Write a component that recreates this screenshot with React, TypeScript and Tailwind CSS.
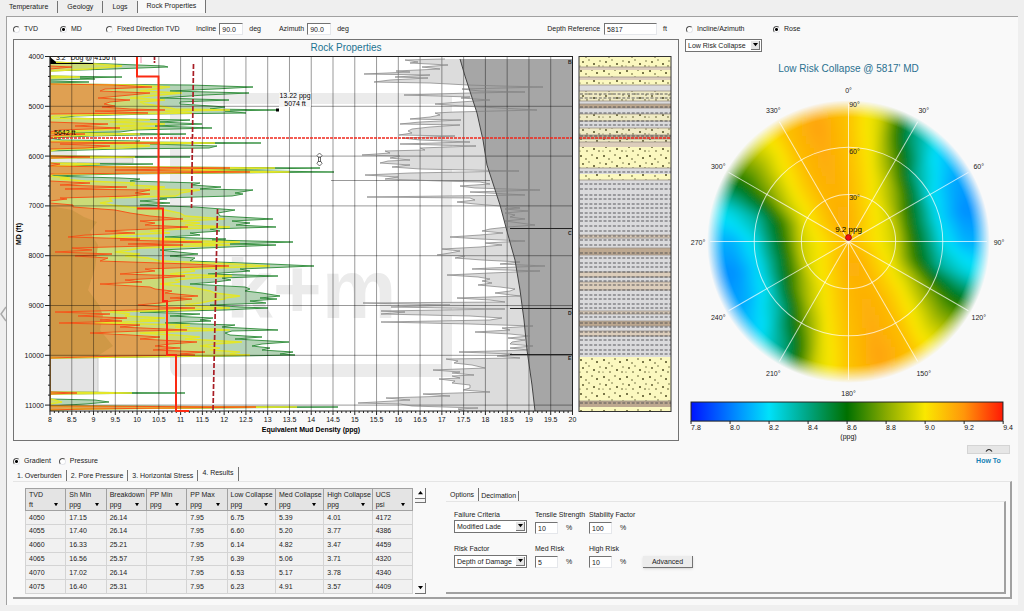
import { useState } from "react";
import type { ReactNode } from "react";

// depth position, low / medium / high risk collapse position
const collapse: number[][] = [
  [57, 50, 50, 50], [62, 50, 50, 50], [64, 50, 95, 112], [66, 50, 122, 164], [67, 72, 112, 168], [69, 50, 88, 112],
  [71, 50, 50, 50], [76, 50, 50, 50], [77, 50, 80, 122], [78, 50, 50, 80], [79, 50, 50, 95], [80, 50, 50, 50],
  [81, 50, 50, 50], [82, 50, 50, 89], [83, 50, 50, 50], [84, 50, 50, 50], [85, 112, 130, 190], [87, 152, 170, 253],
  [89, 105, 155, 215], [91, 100, 140, 170], [93, 150, 182, 249], [95, 130, 160, 205], [98, 98, 130, 160],
  [100, 130, 165, 229], [102, 110, 140, 180], [104, 104, 145, 180], [106, 115, 160, 212], [107, 102, 165, 225],
  [109, 130, 175, 210], [110, 165, 230, 277], [111, 95, 165, 225], [113, 148, 192, 246], [114, 50, 120, 150],
  [116, 50, 55, 75], [118, 50, 50, 60], [120, 50, 150, 190], [122, 50, 110, 160], [124, 108, 165, 202],
  [126, 75, 115, 155], [128, 120, 160, 212], [130, 60, 100, 135], [132, 50, 60, 120], [133, 50, 50, 60],
  [134, 85, 140, 186], [136, 50, 60, 90], [138, 50, 50, 50], [140, 50, 50, 62], [141, 50, 50, 140],
  [142, 50, 110, 135], [143, 160, 215, 261], [144, 60, 110, 150], [146, 110, 150, 217], [148, 85, 122, 209],
  [149, 50, 60, 120], [151, 50, 50, 50], [156, 50, 50, 50], [157, 90, 135, 190], [158, 50, 50, 50],
  [163, 50, 50, 50], [164, 60, 100, 153], [166, 50, 50, 60], [167, 110, 140, 165], [168, 230, 275, 320],
  [170, 115, 160, 205], [172, 250, 290, 334], [174, 50, 55, 120], [176, 50, 50, 50], [178, 50, 70, 120],
  [179, 50, 60, 140], [181, 50, 85, 130], [183, 90, 135, 200], [185, 60, 130, 192], [187, 127, 165, 221],
  [189, 65, 145, 200], [190, 150, 200, 253], [193, 135, 180, 235], [194, 150, 180, 243], [196, 130, 175, 232],
  [198, 60, 110, 160], [199, 67, 110, 167], [201, 50, 112, 140], [203, 50, 100, 170], [205, 73, 112, 140],
  [207, 73, 130, 195], [210, 115, 165, 235], [213, 130, 180, 218], [216, 150, 185, 220], [219, 183, 225, 273],
  [221, 140, 180, 232], [223, 155, 200, 250], [225, 145, 185, 236], [227, 188, 230, 276], [229, 150, 180, 210],
  [231, 105, 150, 220], [233, 135, 170, 190], [235, 85, 120, 200], [237, 68, 110, 165], [239, 140, 185, 226],
  [240, 120, 160, 212], [242, 202, 240, 293], [244, 128, 190, 230], [245, 183, 230, 276], [248, 72, 140, 205],
  [250, 92, 130, 160], [252, 55, 115, 178], [254, 112, 140, 198], [256, 75, 125, 170], [258, 108, 148, 195],
  [261, 100, 160, 190], [264, 190, 235, 270], [266, 229, 270, 314], [269, 145, 190, 240], [271, 155, 195, 250],
  [274, 120, 170, 208], [276, 185, 232, 278], [278, 160, 195, 222], [280, 125, 175, 231], [282, 142, 180, 215],
  [284, 100, 160, 190], [287, 150, 190, 245], [289, 155, 200, 250], [291, 172, 210, 245], [293, 165, 215, 262],
  [296, 198, 240, 280], [298, 170, 225, 260], [299, 192, 225, 277], [301, 172, 210, 250], [303, 160, 200, 266],
  [305, 138, 185, 210], [307, 162, 210, 240], [308, 195, 230, 268], [310, 135, 185, 225], [312, 55, 110, 140],
  [314, 110, 130, 200], [316, 78, 125, 170], [318, 127, 165, 213], [320, 100, 140, 200], [321, 122, 160, 211],
  [323, 59, 95, 165], [325, 140, 190, 235], [327, 120, 175, 222], [330, 187, 230, 278], [331, 140, 190, 232],
  [333, 90, 140, 225], [335, 130, 175, 230], [337, 160, 200, 262], [339, 140, 185, 235], [342, 197, 242, 289],
  [344, 170, 215, 262], [346, 155, 200, 252], [348, 180, 220, 270], [350, 153, 210, 262], [352, 205, 240, 293],
  [354, 180, 230, 280], [355, 195, 250, 295], [356, 120, 200, 240], [358, 50, 50, 50], [392, 50, 50, 50],
  [393, 77, 132, 185], [394, 50, 50, 50], [399, 50, 50, 50], [400, 50, 55, 95], [402, 50, 62, 109],
  [404, 50, 50, 85], [406, 50, 50, 50], [407, 256, 297, 338], [409, 85, 85, 85], [410, 50, 50, 50],
];

const breakdown: number[][] = [
  [59, 445], [60, 405], [62, 418], [63, 410], [65, 448], [67, 422], [69, 440], [71, 396], [72, 410], [74, 364],
  [75, 430], [77, 395], [78, 428], [80, 390], [82, 374], [83, 430], [85, 468], [86, 500], [87, 543], [89, 462],
  [91, 480], [92, 525], [93, 470], [95, 404], [97, 470], [98, 461], [100, 490], [102, 460], [104, 435], [106, 462],
  [108, 500], [110, 537], [112, 455], [113, 435], [115, 440], [117, 430], [119, 410], [120, 461], [122, 420],
  [124, 400], [125, 460], [127, 430], [129, 412], [131, 408], [133, 412], [135, 399], [136, 455], [138, 402],
  [140, 420], [142, 470], [144, 400], [146, 476], [148, 420], [150, 425], [151, 385], [153, 390], [155, 362],
  [156, 400], [158, 390], [160, 410], [161, 388], [163, 380], [165, 410], [167, 392], [169, 420], [171, 519],
  [173, 410], [175, 365], [177, 398], [179, 385], [181, 440], [182, 480], [184, 490], [186, 460], [188, 475],
  [190, 540], [192, 470], [195, 525], [197, 367], [198, 470], [200, 475], [202, 457], [204, 475], [206, 500],
  [208, 520], [209, 505], [211, 528], [213, 505], [215, 515], [217, 510], [219, 525], [221, 505], [223, 520],
  [225, 535], [227, 508], [229, 490], [231, 482], [233, 503], [235, 480], [237, 450], [239, 480], [241, 525],
  [243, 485], [245, 502], [247, 480], [249, 442], [251, 460], [253, 450], [255, 437], [256, 465], [258, 455],
  [260, 482], [262, 520], [264, 500], [266, 545], [268, 490], [269, 472], [271, 540], [273, 490], [275, 447],
  [277, 478], [279, 490], [281, 482], [283, 492], [285, 478], [287, 500], [289, 515], [291, 510], [293, 495],
  [296, 520], [298, 457], [300, 490], [302, 505], [303, 363], [305, 450], [307, 391], [309, 505], [311, 381],
  [312, 405], [314, 381], [316, 470], [318, 502], [320, 490], [322, 381], [324, 470], [326, 533], [328, 502],
  [330, 510], [332, 475], [334, 510], [336, 530], [338, 508], [340, 525], [342, 512], [344, 510], [346, 533],
  [348, 510], [350, 528], [352, 459], [354, 512], [356, 497], [358, 520], [359, 446], [361, 458], [363, 454],
  [365, 472], [368, 485], [370, 433], [372, 460], [373, 452], [375, 474], [376, 452], [378, 460], [379, 439],
  [381, 455], [383, 452], [385, 470], [388, 470], [390, 463], [392, 490], [394, 423], [396, 450], [398, 386],
  [400, 410], [403, 358], [404, 400], [406, 412], [408, 478], [409, 458], [411, 465],
];

const depths = ["4000", "5000", "6000", "7000", "8000", "9000", "10000", "11000"];
const densities = Array.from({ length: 25 }, (_, i) => 8 + i * 0.5);

// kind: s = sand, t = thin sand, g = shale, b = brown streak, d = dark streak
const lithology: [number, number, string][] = [
  [56, 67, "s"], [67, 70, "b"], [70, 77, "s"], [77, 80, "b"], [80, 85, "s"], [85, 91, "g"], [91, 101, "t"],
  [101, 104, "g"], [104, 108, "d"], [108, 114, "g"], [114, 121, "t"], [121, 128, "g"], [128, 135, "t"],
  [135, 139, "d"], [139, 142, "t"], [142, 147, "b"], [147, 168, "s"], [168, 174, "g"], [174, 180, "s"],
  [180, 235, "g"], [235, 238, "b"], [238, 248, "g"], [248, 255, "d"], [255, 272, "g"], [272, 277, "b"],
  [277, 282, "g"], [282, 290, "b"], [290, 311, "g"], [311, 314, "b"], [314, 321, "g"], [321, 326, "d"],
  [326, 331, "g"], [331, 336, "b"], [336, 357, "g"], [357, 401, "s"], [401, 407, "d"], [407, 411, "s"],
];

const bandFill: Record<string, string> = {
  s: "#fbf8bf",
  t: "#f0ebc4",
  g: "#dadadc",
  b: "#dccdbb",
  d: "#bda890",
};

const dashRows = [
  94, 98, 107, 113, 121, 125, 136, 172, 184, 189, 195, 199, 204, 208, 213, 217, 221, 226, 231, 236, 240, 245,
  253, 258, 263, 267, 272, 277, 281, 285, 290, 295, 299, 304, 308, 313, 317, 323, 327, 332, 336, 340, 345, 350, 354,
  403,
];

const line = (points: number[][]) => points.map((p) => p.join(",")).join(" ");
const curve = (col: number) => collapse.map((row) => [row[col], row[0]]);
const area = (col: number) => line([[50, 57], ...curve(col), [50, 411]]);

const overburden = "460,59 465,76 477,113 483,140 487,165 500,205 508,235 515,260 520,290 524,320 527,350 532,385 535,411";
const mudLine = breakdown.map(([y, x]) => [x, y]);

const LogChart = () => {
  return (
    <svg viewBox="14 40 664 400" className="block h-auto w-full" fontFamily="Liberation Sans, Arial, sans-serif">
      <defs>
        <clipPath id="plot">
          <rect x="50" y="57" width="522" height="354" />
        </clipPath>
        <pattern id="grains" width="23" height="17" patternUnits="userSpaceOnUse" x="579" y="357">
          <g fill="#4f4c22">
            <circle cx="2" cy="3" r="1" />
            <circle cx="7" cy="6" r="0.8" />
            <circle cx="13" cy="2" r="0.8" />
            <circle cx="18" cy="5" r="1" />
            <circle cx="21" cy="10" r="0.7" />
            <circle cx="4" cy="11" r="0.9" />
            <circle cx="10" cy="9" r="0.7" />
            <circle cx="15" cy="13" r="1" />
            <circle cx="8" cy="15" r="0.8" />
            <circle cx="1" cy="15" r="0.6" />
            <circle cx="20" cy="15" r="0.8" />
          </g>
        </pattern>
      </defs>

      <text x="346" y="51" fontSize="10" fill="#1c7391" textAnchor="middle">
        Rock Properties
      </text>

      <rect x="50" y="57" width="522" height="354" fill="#fff" />
      <g clipPath="url(#plot)">
        <g fill="#ebebeb">
          <path d="M170 93H452V377H180Q170 377 170 366ZM180 104V364H441V104Z" fillRule="evenodd" />
          <text x="226" y="318" fontSize="84" fontWeight="bold">
            k+m
          </text>
        </g>
        <rect x="50" y="358" width="48" height="34" fill="#e4e4e4" stroke="#ccc" />
        <rect x="50" y="158" width="83" height="5" fill="#e8e8e4" stroke="#aaa" strokeWidth="0.6" />
        <rect x="50" y="151" width="27" height="13" fill="#e8e8e4" />

        <polygon points={`${line(mudLine)} 535,411 572,411 572,59`} fill="#dcdcdc" />
        <polygon points={`${overburden} 572,411 572,59`} fill="#a6a6a6" />

        <polygon points={area(3)} fill="#b4d3b6" />
        <polygon points={area(2)} fill="#cbdb78" />
        <polygon points={area(1)} fill="#dfa052" />
        <polygon
          points="50,206 72,210 84,217 97,222 90,232 98,245 95,268 88,290 99,305 103,316 100,330 113,346 96,357 50,358"
          fill="#cb9643"
          opacity="0.8"
        />
        <polyline points={line(curve(3))} fill="none" stroke="#2c8b38" strokeWidth="0.9" />
        <polyline points={line(curve(2))} fill="none" stroke="#e3e62a" strokeWidth="1.3" />
        <polyline points={line(curve(1))} fill="none" stroke="#f5571b" strokeWidth="1" />
      </g>

      <g stroke="#000" strokeOpacity="0.5" strokeWidth="0.8">
        {densities.map((d, i) => (
          <line key={d} x1={50 + i * 21.77} x2={50 + i * 21.77} y1="57" y2="411" />
        ))}
        {depths.map((d, i) => (
          <line key={d} x1="50" x2="572" y1={56.5 + i * 49.8} y2={56.5 + i * 49.8} />
        ))}
        <line x1="331" x2="490" y1="180.5" y2="180.5" />
      </g>

      <g clipPath="url(#plot)">
        <polyline points={line(mudLine)} fill="none" stroke="#808080" strokeWidth="0.7" />
        <polyline points={overburden} fill="none" stroke="#444" strokeWidth="1" />
        <text x="56" y="60" fontSize="7">
          3.2° Dog @ 4156 ft
        </text>
        <path d="M50 57L56 62V64H50Z" />
        <line x1="50" x2="93" y1="63.5" y2="63.5" stroke="#000" />
      </g>

      <g stroke="#222" strokeWidth="1">
        <line x1="510" x2="572" y1="228.5" y2="228.5" />
        <line x1="510" x2="572" y1="308.5" y2="308.5" />
        <line x1="510" x2="572" y1="354.5" y2="354.5" />
      </g>
      <g fontSize="5" fontWeight="bold" fill="#222">
        <text x="568" y="64">B</text>
        <text x="568" y="235">C</text>
        <text x="568" y="315">D</text>
        <text x="568" y="360">E</text>
      </g>

      {/* depth cursor */}
      <text x="54" y="135" fontSize="7">
        5642 ft
      </text>
      <line x1="50" x2="572" y1="138" y2="138" stroke="#f0271c" strokeWidth="1.500" strokeDasharray="3 1" />
      <rect x="276" y="108.500" width="3" height="3" />
      <rect x="279" y="92" width="32" height="15" fill="#f6f6f6" />
      <text x="295" y="98" fontSize="7" textAnchor="middle">
        13.22 ppg
      </text>
      <text x="295" y="106" fontSize="7" textAnchor="middle">
        5074 ft
      </text>
      <g fill="#fff" stroke="#444" strokeWidth="0.8">
        <path d="M318.500 157V162H320.500V157Z" />
        <path d="M317 155.500L319.500 153L322 155.500L321 157H318Z" />
        <path d="M318 161.500H321L322 163.500L319.500 166L317 163.500Z" />
      </g>

      <rect x="50" y="56.500" width="522.500" height="354.500" fill="none" stroke="#222" />
      <g stroke="#222" strokeWidth="1">
        {Array.from({ length: 36 }, (_, i) => (
          <line key={i} x1={i % 5 ? 48 : 45} x2="50" y1={56.5 + i * 9.96} y2={56.5 + i * 9.96} />
        ))}
        {Array.from({ length: 121 }, (_, i) => (
          <line key={i} x1={50 + i * 4.354} x2={50 + i * 4.354} y1="411" y2={i % 5 ? 413 : 415} />
        ))}
      </g>

      <g fill="none" stroke="#fb2a12" strokeWidth="2">
        <path d="M137 57V76.500H158.500V208" />
        <path d="M137 208.500H163V301H167V355H176V411H189" />
      </g>
      <g fill="none" stroke="#a81d25" strokeWidth="1.700" strokeDasharray="5 2">
        <path d="M193.500 64L191.500 208" />
        <path d="M217.500 209L213 411" />
        <path d="M154.500 57V63" strokeDasharray="3 1" />
      </g>
      <line x1="141" x2="141" y1="57" y2="63" stroke="#f08aa8" />

      <g fontSize="7" fill="#111">
        {depths.map((d, i) => (
          <text key={d} x="44" y={59 + i * 49.8} textAnchor="end">
            {d}
          </text>
        ))}
        {densities.map((d, i) => (
          <text key={d} x={50 + i * 21.77} y="422" textAnchor="middle">
            {d}
          </text>
        ))}
      </g>
      <text x="311" y="432" fontSize="7" fontWeight="bold" textAnchor="middle">
        Equivalent Mud Density (ppg)
      </text>
      <text x="0" y="0" fontSize="7" fontWeight="bold" textAnchor="middle" transform="translate(21 234) rotate(-90)">
        MD (ft)
      </text>

      {/* lithology column */}
      {lithology.map(([top, bottom, kind]) => (
        <g key={top}>
          <rect x="579" y={top} width="92" height={bottom - top} fill={bandFill[kind]} />
          {(kind === "s" || kind === "t") && (
            <rect x="579" y={top} width="92" height={bottom - top} fill="url(#grains)" />
          )}
          {kind !== "s" && <line x1="579" x2="671" y1={top} y2={top} stroke="#9b8f86" strokeWidth="0.8" />}
        </g>
      ))}
      {dashRows.map((y) => (
        <line key={y} x1="580" x2="671" y1={y} y2={y} stroke="#4d4d50" strokeWidth="0.9" strokeDasharray="3 1.700" />
      ))}
      <line x1="579" x2="671" y1="138" y2="138" stroke="#f0271c" strokeWidth="1.500" strokeDasharray="3 1" />
      <rect x="579" y="56.500" width="92" height="355" fill="none" stroke="#333" />
    </svg>
  );
};

// collapse gradient every 15 degrees of azimuth; the field repeats after 180
const radii = [0, 23, 47, 70, 94, 116, 138];
const field = [
  [9.12, 9.14, 9.12, 9.11, 9.1, 9.09, 9.09],
  [9.12, 9.11, 9.07, 9.03, 8.98, 8.94, 8.92],
  [9.12, 9.09, 9.01, 8.92, 8.72, 8.48, 8.35],
  [9.12, 9.06, 8.97, 8.77, 8.38, 8.22, 8.13],
  [9.12, 9.04, 8.94, 8.6, 8.22, 8.1, 8.05],
  [9.12, 9.03, 8.92, 8.52, 8.18, 8.04, 8.03],
  [9.12, 9.03, 8.92, 8.55, 8.22, 8.1, 8.1],
  [9.12, 9.05, 8.95, 8.64, 8.36, 8.27, 8.22],
  [9.12, 9.08, 9.0, 8.9, 8.76, 8.66, 8.66],
  [9.12, 9.11, 9.06, 9.03, 8.97, 8.91, 8.93],
  [9.12, 9.13, 9.12, 9.12, 9.11, 9.1, 9.08],
  [9.12, 9.14, 9.13, 9.14, 9.15, 9.17, 9.15],
];

const scale: [number, number[]][] = [
  [7.8, [0, 20, 255]],
  [8.05, [0, 150, 255]],
  [8.2, [0, 225, 250]],
  [8.4, [0, 165, 130]],
  [8.6, [0, 112, 0]],
  [8.8, [135, 170, 0]],
  [9, [250, 232, 0]],
  [9.2, [255, 150, 10]],
  [9.4, [255, 25, 5]],
];

const valueAt = (x: number, y: number) => {
  const r = Math.min(Math.hypot(x, y), 137.9);
  const az = (((Math.atan2(x, -y) * 180) / Math.PI + 360) % 180) / 15;
  const a = Math.floor(az) % 12;
  const b = (a + 1) % 12;
  const t = az - Math.floor(az);
  let i = 0;
  while (radii[i + 1] < r) i++;
  const s = (r - radii[i]) / (radii[i + 1] - radii[i]);
  const inner = field[a][i] * (1 - t) + field[b][i] * t;
  const outer = field[a][i + 1] * (1 - t) + field[b][i + 1] * t;
  return inner * (1 - s) + outer * s;
};

const colorOf = (v: number) => {
  let i = 0;
  while (i < scale.length - 2 && scale[i + 1][0] < v) i++;
  const [lo, from] = scale[i];
  const [hi, to] = scale[i + 1];
  const t = (v - lo) / (hi - lo);
  return `rgb(${from.map((c, k) => Math.round(c + (to[k] - c) * t)).join(",")})`;
};

const cells: { x: number; y: number; fill: string }[] = [];
for (let x = -152; x < 152; x += 4) {
  for (let y = -152; y < 152; y += 4) {
    if (Math.hypot(x + 2, y + 2) < 152) cells.push({ x, y, fill: colorOf(valueAt(x + 2, y + 2)) });
  }
}

const azimuths = Array.from({ length: 12 }, (_, i) => i * 30);
const legend = ["7.8", "8.0", "8.2", "8.4", "8.6", "8.8", "9.0", "9.2", "9.4"];

const Rose = () => {
  return (
    <svg viewBox="680 53 338 388" className="block h-auto w-full" fontFamily="Liberation Sans, Arial, sans-serif">
      <defs>
        <filter id="soft">
          <feGaussianBlur stdDeviation="4" />
        </filter>
        <radialGradient id="edge" gradientUnits="userSpaceOnUse" cx="0" cy="0" r="141">
          <stop offset="0.88" stopColor="#fff" />
          <stop offset="1" stopColor="#000" />
        </radialGradient>
        <mask id="disc" maskUnits="userSpaceOnUse" x="-145" y="-145" width="290" height="290">
          <circle r="141" fill="url(#edge)" />
        </mask>
        <linearGradient id="ramp">
          {scale.map(([v, rgb]) => (
            <stop key={v} offset={(v - 7.8) / 1.6} stopColor={`rgb(${rgb.join(",")})`} />
          ))}
        </linearGradient>
      </defs>

      <text x="849" y="73" fontSize="10" fill="#2a7090" textAnchor="middle">
        Low Risk Collapse @ 5817&apos; MD
      </text>

      <g transform="translate(849 242)">
        <g mask="url(#disc)">
          <g filter="url(#soft)">
            {cells.map((c) => (
              <rect key={`${c.x},${c.y}`} x={c.x} y={c.y} width="5" height="5" fill={c.fill} />
            ))}
          </g>
        </g>
        <g fill="none" stroke="#fff" strokeOpacity="0.7">
          <circle r="47" />
          <circle r="94" />
          {azimuths.map((a) => (
            <line key={a} x1="0" y1="0" x2="0" y2="-138" transform={`rotate(${a})`} />
          ))}
        </g>
        <g fontSize="7" fill="#222" textAnchor="middle">
          {azimuths.map((a) => {
            const rad = (a * Math.PI) / 180;
            return (
              <text key={a} x={Math.sin(rad) * 150} y={3 - Math.cos(rad) * 151}>
                {a}°
              </text>
            );
          })}
          <text x="6" y="-134">90°</text>
          <text x="6" y="-87">60°</text>
          <text x="6" y="-41">30°</text>
        </g>
        <text x="0" y="-10" fontSize="8" textAnchor="middle">
          9.2 ppg
        </text>
        <circle cy="-4" r="3" fill="#f01010" stroke="#700" strokeWidth="0.7" />
      </g>

      <rect x="692" y="402" width="311" height="19" fill="url(#ramp)" stroke="#222" />
      {legend.map((label, i) => (
        <g key={label}>
          <line x1={692 + i * 38.9} x2={692 + i * 38.9} y1="421" y2="424" stroke="#222" />
          <text x={692 + i * 38.9} y="430" fontSize="7" fill="#111">
            {label}
          </text>
        </g>
      ))}
      <text x="849" y="439" fontSize="7" fill="#111" textAnchor="middle">
        (ppg)
      </text>
    </svg>
  );
};

interface RadioProps {
  name: string;
  label: string;
  checked?: boolean;
  className?: string;
}

const Radio = ({ name, label, checked, className = "" }: RadioProps) => {
  return (
    <label className={`flex items-center gap-1 whitespace-nowrap ${className}`}>
      <input
        type="radio"
        name={name}
        defaultChecked={checked}
        className="size-[7px] appearance-none rounded-full border border-b-gray-200 border-l-neutral-600 border-r-gray-200 border-t-neutral-600 bg-white checked:bg-[radial-gradient(#000_1px,#fff_2px)]"
      />
      {label}
    </label>
  );
};

const boxClass =
  "h-3 border border-b-gray-200 border-l-neutral-500 border-r-gray-200 border-t-neutral-500 bg-white px-[2px] outline-none";

const Picker = ({ id, label, options }: { id: string; label?: string; options: string[] }) => {
  return (
    <div className="relative w-full">
      <select
        id={id}
        aria-label={label}
        className="block h-[13px] w-full appearance-none border border-neutral-500 bg-white pl-[2px] outline-none"
      >
        {options.map((o) => (
          <option key={o}>{o}</option>
        ))}
      </select>
      <span className="pointer-events-none absolute inset-y-[2px] right-[2px] flex w-[9px] items-center justify-center border-b border-r border-neutral-500 bg-neutral-200">
        <svg viewBox="0 0 6 4" className="w-[5px]">
          <path d="M0 0H6L3 4Z" />
        </svg>
      </span>
    </div>
  );
};

const Percent = ({ id, label, value }: { id: string; label: string; value: string }) => {
  return (
    <div className="flex flex-col">
      <label htmlFor={id} className="whitespace-nowrap">
        {label}
      </label>
      <div className="mt-[2px] flex items-center gap-2">
        <input id={id} defaultValue={value} className={`w-[23px] ${boxClass}`} />
        <span>%</span>
      </div>
    </div>
  );
};

const columns = [
  ["TVD", "ft"],
  ["Sh Min", "ppg"],
  ["Breakdown", "ppg"],
  ["PP Min", "ppg"],
  ["PP Max", "ppg"],
  ["Low Collapse", "ppg"],
  ["Med Collapse", "ppg"],
  ["High Collapse", "ppg"],
  ["UCS", "psi"],
];

const rows = [
  ["4050", "17.15", "26.14", "", "7.95", "6.75", "5.39", "4.01", "4172"],
  ["4055", "17.40", "26.14", "", "7.95", "6.60", "5.20", "3.77", "4386"],
  ["4060", "16.33", "25.21", "", "7.95", "6.14", "4.82", "3.47", "4459"],
  ["4065", "16.56", "25.57", "", "7.95", "6.39", "5.06", "3.71", "4320"],
  ["4070", "17.02", "26.14", "", "7.95", "6.53", "5.17", "3.78", "4340"],
  ["4075", "16.40", "25.31", "", "7.95", "6.23", "4.91", "3.57", "4409"],
];

const ResultsTable = () => {
  return (
    <div className="flex gap-[2px]">
      <table className="h-[106px] w-[388px] table-fixed border-collapse bg-[#f1f1f1] text-left">
        <colgroup>
          {columns.map(([name]) => (
            <col key={name} className={name.includes("Collapse") ? "w-12" : "w-10"} />
          ))}
        </colgroup>
        <thead className="bg-[#e4e4e4]">
          <tr>
            {columns.map(([name, unit]) => (
              <th key={name} className="h-[22px] border border-neutral-400 px-[3px] font-normal leading-[10px]">
                <div className="whitespace-nowrap">{name}</div>
                <div className="flex items-center justify-between">
                  {unit}
                  <svg viewBox="0 0 6 5" className="mr-1 w-1">
                    <path d="M0 0H6L3 5Z" />
                  </svg>
                </div>
              </th>
            ))}
          </tr>
        </thead>
        <tbody>
          {rows.map((row) => (
            <tr key={row[0]}>
              {row.map((cell, i) => (
                <td key={i} className="border border-neutral-300 px-[3px] leading-[8px]">
                  {cell}
                </td>
              ))}
            </tr>
          ))}
        </tbody>
      </table>
      <div className="flex w-[11px] flex-col">
        <button aria-label="Scroll up" className="flex h-[11px] items-center justify-center border-b border-r border-neutral-500">
          <svg viewBox="0 0 6 4" className="w-[5px]">
            <path d="M0 4H6L3 0Z" />
          </svg>
        </button>
        <div className="h-1 border-b border-r border-neutral-500 bg-neutral-100" />
        <div className="flex-1" />
        <button aria-label="Scroll down" className="flex h-[11px] items-center justify-center border-b border-r border-neutral-500">
          <svg viewBox="0 0 6 4" className="w-[5px]">
            <path d="M0 0H6L3 4Z" />
          </svg>
        </button>
      </div>
    </div>
  );
};

const Options = () => {
  return (
    <div className="flex flex-1 flex-col">
      <div className="flex h-[13px] items-end">
        <button className="h-[13px] border-r border-neutral-500 bg-[#f9f9f9] px-1">Options</button>
        <button className="h-[10px] border-r border-neutral-500 px-[2px]">Decimation</button>
      </div>
      <div className="flex-1 border-b-2 border-r-2 border-t border-b-neutral-400 border-r-neutral-400 border-t-neutral-200 pl-2 pt-2">
        <div className="grid grid-cols-[73px_46px_46px_50px] gap-x-2 gap-y-[10px]">
          <div>
            <label htmlFor="failure">Failure Criteria</label>
            <Picker id="failure" options={["Modified Lade", "Mohr-Coulomb"]} />
          </div>
          <Percent id="tensile" label="Tensile Strength" value="10" />
          <Percent id="stability" label="Stability Factor" value="100" />
          <div />
          <div className="flex flex-col justify-between">
            <label htmlFor="risk">Risk Factor</label>
            <Picker id="risk" options={["Depth of Damage", "Breakout Width"]} />
          </div>
          <Percent id="med" label="Med Risk" value="5" />
          <Percent id="high" label="High Risk" value="10" />
          <button className="h-3 self-end border-b border-r border-neutral-500 bg-[#ececec] shadow-sm">Advanced</button>
        </div>
      </div>
    </div>
  );
};

interface TabProps {
  active: boolean;
  onClick: () => void;
  children: ReactNode;
}

const Tab = ({ active, onClick, children }: TabProps) => {
  return (
    <button
      onClick={onClick}
      className={`whitespace-nowrap border-r border-neutral-500 ${active ? "h-full bg-[#f9f9f9] pb-[2px]" : "h-[11px]"} px-1`}
    >
      {children}
    </button>
  );
};

const tabs = ["Temperature", "Geology", "Logs", "Rock Properties"];
const resultTabs = ["1. Overburden", "2. Pore Pressure", "3. Horizontal Stress", "4. Results"];

export default function App() {
  const [tab, setTab] = useState("Rock Properties");
  const [resultTab, setResultTab] = useState("4. Results");

  return (
    <div className="flex min-h-screen flex-col bg-[#efefef] font-['Liberation_Sans',Arial,sans-serif] text-[7px] leading-[10px] text-[#222]">
      <nav className="flex h-[13px] items-end">
        {tabs.map((t) => (
          <button
            key={t}
            onClick={() => setTab(t)}
            className={`border-r border-neutral-500 px-[9px] ${t === tab ? "h-[13px] bg-[#f9f9f9] pb-[2px]" : "h-[12px]"}`}
          >
            {t}
          </button>
        ))}
      </nav>
      <div className="mt-[3px] flex flex-1">
        <button aria-label="Collapse panel" className="flex w-[6px] items-center justify-center">
          <svg viewBox="0 0 6 16" className="w-[6px]" fill="none" stroke="#aaa" strokeWidth="1.500">
            <path d="M6 1L1 8L6 15" />
          </svg>
        </button>
        <main className="mb-[6px] mr-[6px] flex flex-1 flex-col border-l border-t border-neutral-400 bg-[#f9f9f9] pl-[6px]">
          <div className="grid grid-cols-[666fr_339fr]">
            <section>
              <div className="flex h-[22px] items-center pt-[2px]">
                <Radio name="depth" label="TVD" className="w-[47px]" />
                <Radio name="depth" label="MD" checked className="w-[46px]" />
                <Radio name="depth" label="Fixed Direction TVD" className="w-[90px]" />
                <label className="flex items-center gap-[3px]">
                  Incline
                  <input defaultValue="90.0" className={`w-6 ${boxClass}`} />
                  <span className="pl-[3px]">deg</span>
                </label>
                <label className="ml-[18px] flex items-center gap-[3px]">
                  Azimuth
                  <input defaultValue="90.0" className={`w-6 ${boxClass}`} />
                  <span className="pl-[3px]">deg</span>
                </label>
                <label className="ml-auto mr-3 flex items-center gap-1">
                  Depth Reference
                  <input defaultValue="5817" className={`w-[53px] ${boxClass}`} />
                  <span className="pl-[2px]">ft</span>
                </label>
              </div>
              <div className="border border-neutral-500">
                <LogChart />
              </div>
            </section>
            <section>
              <div className="flex h-[22px] items-center pl-[7px] pt-[2px]">
                <Radio name="plot" label="Incline/Azimuth" className="w-[87px]" />
                <Radio name="plot" label="Rose" checked />
              </div>
              <div className="ml-[6px] w-[77px]">
                <Picker
                  id="plotted"
                  label="Plotted value"
                  options={["Low Risk Collapse", "Med Risk Collapse", "High Risk Collapse"]}
                />
              </div>
              <Rose />
            </section>
          </div>

          <div className="flex h-[26px] items-end justify-between pb-[1px]">
            <div className="flex gap-2">
              <Radio name="unit" label="Gradient" checked />
              <Radio name="unit" label="Pressure" />
            </div>
            <div className="mr-2 flex w-[43px] flex-col items-center">
              <button aria-label="Expand" className="flex h-[9px] w-full items-center justify-center border border-neutral-300 bg-[#e6e6e6]">
                <svg viewBox="0 0 8 4" className="w-2" fill="none" stroke="#222" strokeWidth="1.200">
                  <path d="M1 3.500Q4 -0.500 7 3.500" />
                </svg>
              </button>
              <a href="#how-to" className="mt-[2px] font-bold text-[#1582b5]">
                How To
              </a>
            </div>
          </div>

          <div className="flex h-[14px] items-end">
            {resultTabs.map((t) => (
              <Tab key={t} active={t === resultTab} onClick={() => setResultTab(t)}>
                {t}
              </Tab>
            ))}
          </div>
          <div className="mb-[6px] mr-[6px] flex flex-1 gap-5 border-b-2 border-r-2 border-t border-b-neutral-400 border-r-neutral-400 border-t-neutral-200 pb-[3px] pl-3 pr-1 pt-[6px]">
            <ResultsTable />
            <Options />
          </div>
        </main>
      </div>
    </div>
  );
}
